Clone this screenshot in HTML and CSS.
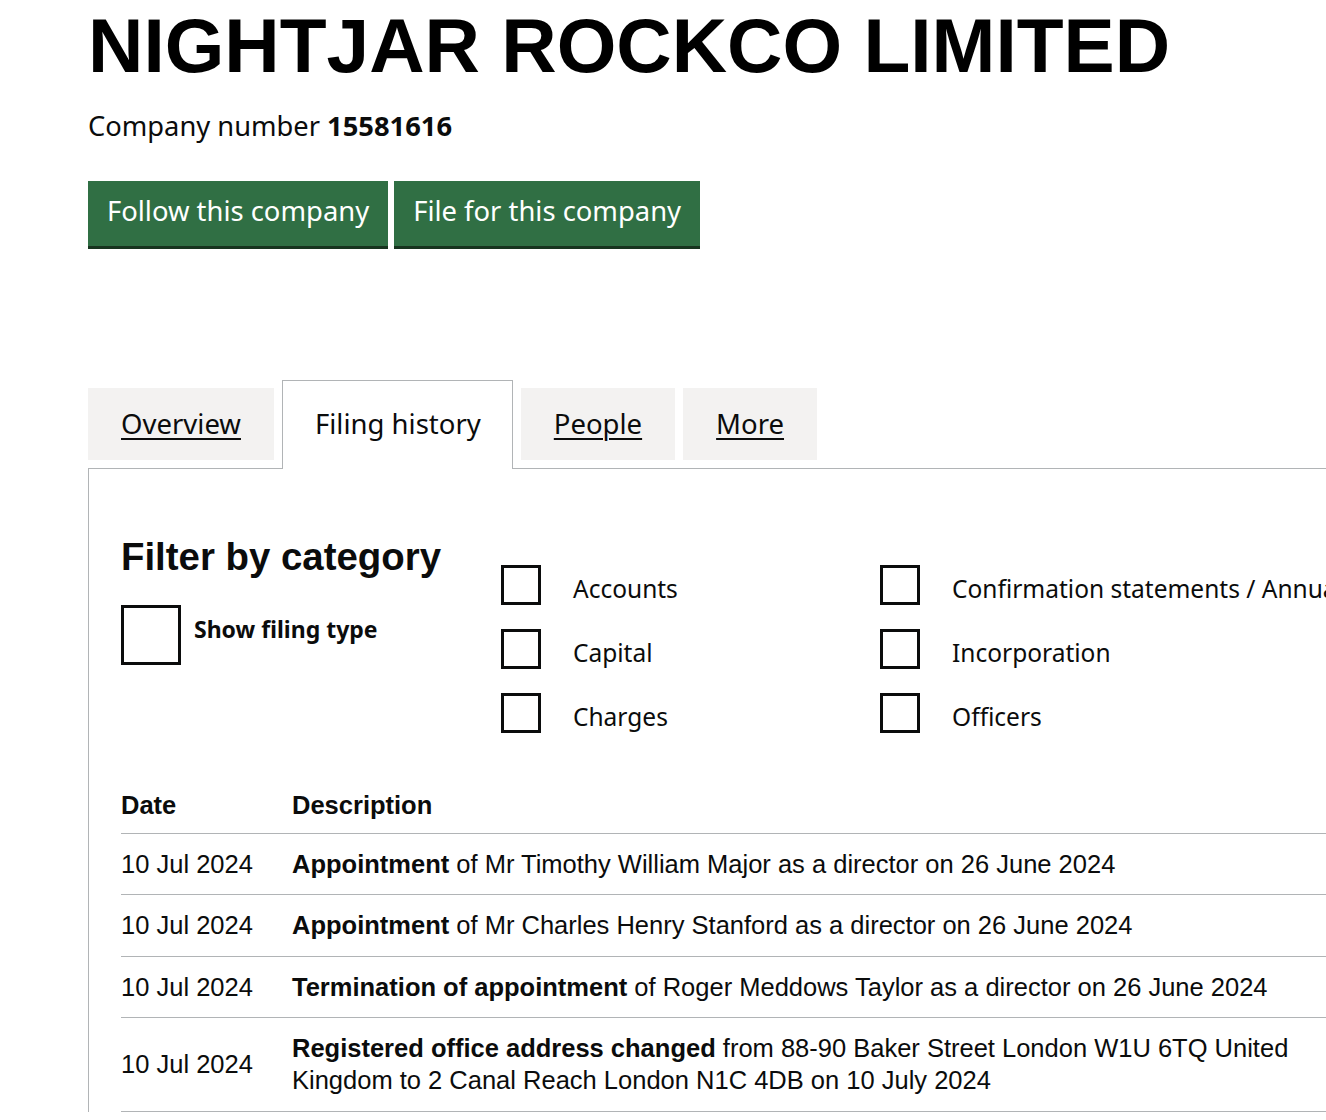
FILE: index.html
```html
<!DOCTYPE html>
<html lang="en">
<head>
    <meta charset="UTF-8">
    <meta name="viewport" content="width=device-width, initial-scale=1.0">
    <title>NIGHTJAR ROCKCO LIMITED - Filing history</title>
    <link rel="stylesheet" href="styles.css">
</head>
<body>
    <div class="page">
        <h1 class="company-name">NIGHTJAR ROCKCO LIMITED</h1>
        <p class="company-number">Company number <strong>15581616</strong></p>

        <div class="actions">
            <a class="button" href="#">Follow this company</a>
            <a class="button" href="#">File for this company</a>
        </div>

        <ul class="tabs">
            <li class="tab"><a href="#">Overview</a></li>
            <li class="tab tab-selected"><span>Filing history</span></li>
            <li class="tab"><a href="#">People</a></li>
            <li class="tab"><a href="#">More</a></li>
        </ul>

        <div class="panel">
            <div class="filters">
                <div class="filter-intro">
                    <h2 class="filter-title">Filter by category</h2>
                    <label class="check check-large">
                        <input type="checkbox">
                        <span>Show filing type</span>
                    </label>
                </div>
                <div class="filter-column">
                    <label class="check"><input type="checkbox"><span>Accounts</span></label>
                    <label class="check"><input type="checkbox"><span>Capital</span></label>
                    <label class="check"><input type="checkbox"><span>Charges</span></label>
                </div>
                <div class="filter-column">
                    <label class="check"><input type="checkbox"><span>Confirmation statements / Annual returns</span></label>
                    <label class="check"><input type="checkbox"><span>Incorporation</span></label>
                    <label class="check"><input type="checkbox"><span>Officers</span></label>
                </div>
            </div>

            <table class="filings">
                <thead>
                    <tr>
                        <th class="col-date">Date</th>
                        <th>Description</th>
                    </tr>
                </thead>
                <tbody>
                    <tr>
                        <td class="col-date">10 Jul 2024</td>
                        <td><strong>Appointment</strong> of Mr Timothy William Major as a director on 26 June 2024</td>
                    </tr>
                    <tr>
                        <td class="col-date">10 Jul 2024</td>
                        <td><strong>Appointment</strong> of Mr Charles Henry Stanford as a director on 26 June 2024</td>
                    </tr>
                    <tr>
                        <td class="col-date">10 Jul 2024</td>
                        <td><strong>Termination of appointment</strong> of Roger Meddows Taylor as a director on 26 June 2024</td>
                    </tr>
                    <tr>
                        <td class="col-date">10 Jul 2024</td>
                        <td><strong>Registered office address changed</strong> from 88-90 Baker Street London W1U 6TQ United Kingdom to 2 Canal Reach London N1C 4DB on 10 July 2024</td>
                    </tr>
                </tbody>
            </table>
        </div>
    </div>
</body>
</html>
```

FILE: styles.css
```css
* {
    box-sizing: border-box;
}

html, body {
    margin: 0;
    padding: 0;
    overflow: hidden;
    background-color: #fff;
    color: #0b0c0c;
}

.page {
    width: 1400px;
    padding-left: 88px;
}

.company-name {
    margin: 0;
    padding-top: 6px;
    font-family: "Liberation Sans", Arial, sans-serif;
    font-size: 76.7px;
    line-height: 80px;
    font-weight: bold;
    color: #000;
}

.company-number {
    margin: 22px 0 0;
    font-family: "Noto Sans", sans-serif;
    font-size: 27.3px;
    line-height: 35px;
}

.actions {
    display: flex;
    gap: 6px;
    margin-top: 38px;
}

.button {
    display: inline-block;
    padding: 12px 19px 18px;
    font-family: "Noto Sans", sans-serif;
    font-size: 27.4px;
    line-height: 35px;
    color: #fff;
    background-color: #306f44;
    box-shadow: 0 3px 0 #17341f;
    text-decoration: none;
}

.tabs {
    display: flex;
    align-items: flex-end;
    gap: 8px;
    margin: 134px 0 0;
    padding: 0;
    list-style: none;
    font-family: "Noto Sans", sans-serif;
    font-size: 27.5px;
    line-height: 35px;
}

.tab {
    padding: 18px 33px 19px;
    margin-bottom: 8px;
    background-color: #f3f2f1;
}

.tab a {
    color: #0b0c0c;
    text-decoration: underline;
    text-decoration-thickness: 2px;
    text-underline-offset: 4px;
}

.tab-selected {
    position: relative;
    z-index: 1;
    padding: 25px 31px 28px 32px;
    margin-bottom: -1px;
    background-color: #fff;
    border: 1px solid #b1b4b6;
    border-bottom: 0;
}

.panel {
    border-top: 1px solid #b1b4b6;
    border-left: 1px solid #b1b4b6;
    padding: 66px 40px 0 32px;
}

.filters {
    display: grid;
    grid-template-columns: 380px 379px auto;
}

.filter-title {
    margin: 0;
    font-family: "Liberation Sans", Arial, sans-serif;
    font-size: 38.4px;
    line-height: 44px;
    font-weight: bold;
}

.filter-column {
    display: flex;
    flex-direction: column;
    gap: 24px;
    padding-top: 30px;
}

.check {
    display: flex;
    align-items: center;
    gap: 32px;
    font-family: "Noto Sans", sans-serif;
    font-size: 24.5px;
    line-height: 30px;
    white-space: nowrap;
}

.check span {
    padding-top: 8px;
}

.check input {
    appearance: none;
    flex: none;
    width: 40px;
    height: 40px;
    margin: 0;
    border: 3px solid #0b0c0c;
    background-color: #fff;
}

.check-large {
    align-items: flex-start;
    gap: 13px;
    margin-top: 26px;
    font-size: 23px;
    font-weight: bold;
}

.check-large span {
    padding-top: 9px;
}

.check-large input {
    width: 60px;
    height: 60px;
}

.filings {
    width: 100%;
    margin-top: 56px;
    border-collapse: collapse;
    font-family: "Liberation Sans", Arial, sans-serif;
    font-size: 25.5px;
    line-height: 32px;
}

.filings th,
.filings td {
    padding: 14px 20px 14px 0;
    text-align: left;
    vertical-align: middle;
    border-bottom: 1px solid #b1b4b6;
}

.filings th {
    padding-top: 0;
    padding-bottom: 12px;
}

.filings tbody td {
    padding-bottom: 14.4px;
}

.col-date {
    width: 171px;
    white-space: nowrap;
}
```
